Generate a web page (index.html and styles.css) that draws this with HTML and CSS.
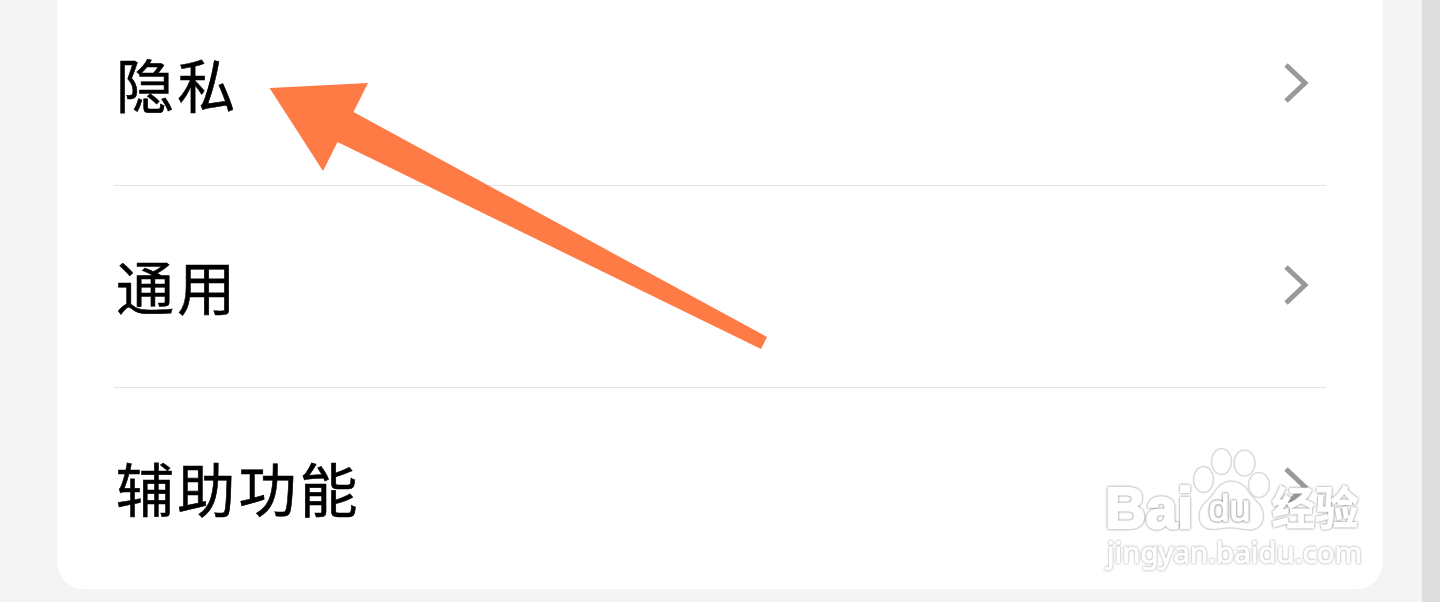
FILE: index.html
```html
<!DOCTYPE html>
<html lang="zh-CN">
<head>
    <meta charset="UTF-8">
    <meta name="viewport" content="width=device-width, initial-scale=1.0">
    <title>设置</title>
    <link rel="stylesheet" href="styles.css">
</head>
<body>
    <div class="page">
        <div class="card">
            <div class="row">
                <span class="label">隐私</span>
                <svg class="chevron" viewBox="0 0 26 42"><path d="M3 3 L22 21 L3 39"/></svg>
            </div>
            <div class="row">
                <span class="label">通用</span>
                <svg class="chevron" viewBox="0 0 26 42"><path d="M3 3 L22 21 L3 39"/></svg>
            </div>
            <div class="row">
                <span class="label">辅助功能</span>
                <svg class="chevron" viewBox="0 0 26 42"><path d="M3 3 L22 21 L3 39"/></svg>
            </div>
        </div>

        <svg class="arrow" viewBox="0 0 500 270">
            <polygon points="0.5,8 99,3 84.5,32 498,257 492,269 68.5,62 54,91"/>
        </svg>

        <svg class="watermark" viewBox="1100 440 270 140">
            <text class="brand" x="1105" y="527.5" textLength="88" lengthAdjust="spacingAndGlyphs">Bai</text>
            <ellipse cx="1203.5" cy="479.5" rx="10" ry="13"/>
            <ellipse cx="1221.5" cy="461.5" rx="10" ry="13"/>
            <ellipse cx="1244.5" cy="463" rx="10.5" ry="13"/>
            <ellipse cx="1259" cy="485" rx="10.5" ry="12.5"/>
            <path d="M1231 481 C1222 481 1217 487 1213 494 C1208 501 1199 505 1199 516 C1199 525 1205 530 1214 529.5 C1221 529 1225 527.5 1231 528 C1238 528 1243 530.5 1250 530 C1259 529.5 1264 524 1263.5 515 C1263 504 1254 500 1249 492 C1245 485 1240 481 1231 481 Z"/>
            <text class="du" x="1208.5" y="521" textLength="42" lengthAdjust="spacingAndGlyphs">du</text>
            <text class="name" x="1271.5" y="525" textLength="87" lengthAdjust="spacingAndGlyphs">经验</text>
            <text class="url" x="1107" y="563" textLength="255" lengthAdjust="spacingAndGlyphs">jingyan.baidu.com</text>
        </svg>
    </div>
</body>
</html>
```

FILE: styles.css
```css
body {
    margin: 0;
    background-color: #f4f4f4;
    font-family: "Noto Sans CJK SC", sans-serif;
    color: #000;
}
.page {
    position: relative;
    height: 602px;
    box-sizing: border-box;
    padding: 0 39px 0 57px;
    border-right: 18px solid #dedede;
    overflow: hidden;
}
.card {
    height: 589px;
    display: flex;
    flex-direction: column;
    justify-content: flex-end;
    box-sizing: border-box;
    padding: 0 57px;
    background-color: #fff;
    border-radius: 0 0 27px 27px;
}
.row {
    display: flex;
    flex: none;
    align-items: center;
    justify-content: space-between;
    height: 202px;
    box-sizing: border-box;
    padding: 0 17px 3px 2px;
    border-bottom: 1px solid #e4e4e4;
}
.row:last-child {
    height: 201px;
    border-bottom: none;
}
.label {
    margin-bottom: 1px;
    font-size: 58px;
    line-height: 80px;
    letter-spacing: 3.2px;
    -webkit-text-stroke: 0.6px #000;
}
.chevron {
    width: 26px;
    height: 42px;
    fill: none;
    stroke: #999;
    stroke-width: 5;
}
.arrow {
    position: absolute;
    left: 269px;
    top: 80px;
    width: 500px;
    height: 270px;
    fill: #ff7b46;
}
.watermark {
    position: absolute;
    left: 1100px;
    top: 440px;
    width: 270px;
    height: 140px;
    fill: rgba(255, 255, 255, 0.7);
    stroke: #dadada;
    stroke-width: 1.5;
}
.watermark text {
    fill: #fff;
    stroke: #fff;
    filter: drop-shadow(0 0 0.8px #777);
}
.watermark .brand {
    font: bold 58px "Liberation Sans", sans-serif;
    stroke-width: 2.5;
}
.watermark .du {
    font: 36px "Liberation Sans", sans-serif;
    stroke-width: 1.5;
    filter: drop-shadow(0 0 0.8px #444);
}
.watermark .name {
    font: bold 45px "Noto Sans CJK SC", sans-serif;
    stroke-width: 1;
}
.watermark .url {
    font: 29px "Noto Sans", sans-serif;
    stroke-width: 1;
    filter: drop-shadow(0 0 0.8px #999);
}
```
